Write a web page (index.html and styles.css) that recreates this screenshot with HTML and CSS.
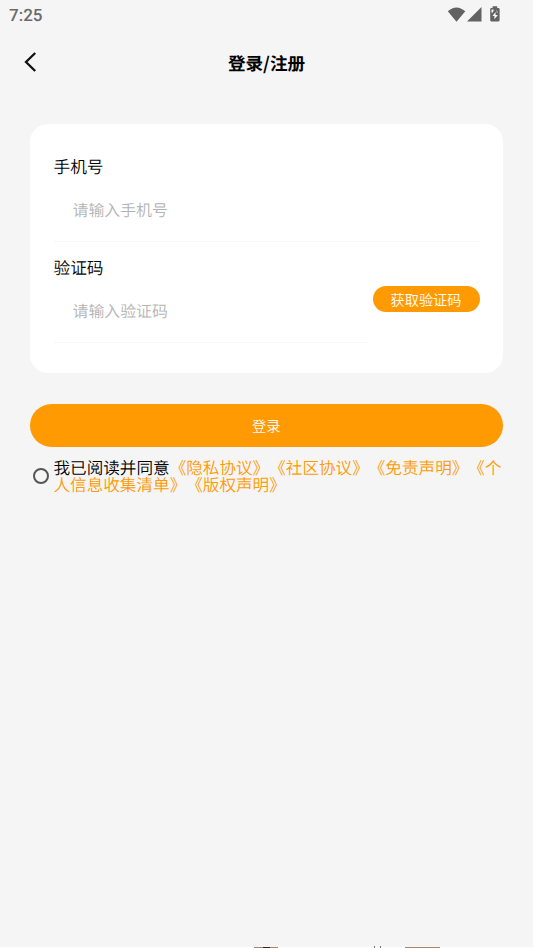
FILE: index.html
```html
<!DOCTYPE html>
<html lang="zh-CN">
<head>
<meta charset="utf-8">
<title>登录/注册</title>
<link rel="stylesheet" href="styles.css">
</head>
<body>
<div class="screen">
  <div class="status">
    <span class="time">7:25</span>
    <svg class="status-icons" width="56" height="20" viewBox="0 0 56 20" fill="#626262">
      <path d="M0.8 5.3Q9.3-2.3 18.3 5.3L9.5 15.8Z"/>
      <path d="M20 15.5L34.5 1V15.5Z"/>
      <path d="M43.2 3Q43.2 1.9 44.3 1.9H45.6V0.3H50.2V1.9H51.5Q52.6 1.9 52.6 3V14.3Q52.6 15.4 51.5 15.4H44.3Q43.2 15.4 43.2 14.3Z"/>
      <path fill="#f5f5f5" d="M48.6 6L45.4 10H47.4V13.2L50.9 9H48.6ZM44.5 3.6H46.6V5L45.4 6.8H44.5ZM49.2 3.6L50.8 6.4L50 7Z"/>
    </svg>
  </div>
  <header class="nav">
    <svg class="back" width="14" height="22" viewBox="0 0 14 22"><path d="M11.2 2L2 11L11.2 20" fill="none" stroke="#111" stroke-width="2.3"/></svg>
    <h1>登录/注册</h1>
  </header>
  <main>
    <section class="card">
      <div class="field">
        <label>手机号</label>
        <div class="input">请输入手机号</div>
      </div>
      <div class="code-row">
        <div class="field">
          <label>验证码</label>
          <div class="input">请输入验证码</div>
        </div>
        <button class="code-btn">获取验证码</button>
      </div>
    </section>
    <button class="login">登录</button>
    <div class="agree">
      <span class="radio"></span>
      <p>我已阅读并同意<a>《隐私协议》</a><a>《社区协议》</a><a>《免责声明》</a><a>《个<br>人信息收集清单》</a><a>《版权声明》</a></p>
    </div>
  </main>
  <svg class="peek" width="533" height="2" viewBox="0 0 533 2">
    <path fill="#fff" d="M0 1H533V2H0Z"/>
    <path fill="#a98563" d="M254 1H278V2H254ZM405 1H440V2H405Z"/>
    <path fill="#33201d" d="M263 1H270V2H263Z"/>
    <path fill="#777" d="M374 0H375V2H374ZM380 0H381V2H380Z"/>
  </svg>
</div>
</body>
</html>
```
FILE: styles.css
```css
* { box-sizing: border-box; }
body {
  margin: 0;
  background: #f5f5f5;
  color: #000;
  font-family: "Noto Sans CJK SC", sans-serif;
  font-weight: 350;
  text-rendering: geometricPrecision;
  text-spacing-trim: space-all;
}
.screen {
  height: 948px;
  display: flex;
  flex-direction: column;
  overflow: hidden;
}
.status {
  height: 32px;
  padding: 6px 30px 0 9px;
  display: flex;
  justify-content: space-between;
}
.time {
  font: 500 17px/21px Roboto, sans-serif;
  color: #6a6a6a;
}
.nav {
  height: 60px;
  display: grid;
  grid-template-columns: 60px 1fr 60px;
  align-items: center;
}
.back { margin-left: 24px; }
h1 {
  margin: 3px 0 0;
  text-align: center;
  font-size: 17.6px;
  line-height: 26px;
  font-weight: 700;
}
main { padding: 32px 30px 0 29.5px; flex: 1; }
.card {
  height: 249px;
  padding: 29px 23.5px 0 24px;
  border-radius: 18px;
  background: #fff;
}
.field { height: 101px; }
.field label {
  display: block;
  font-size: 16.7px;
  line-height: 26px;
}
.input {
  height: 63px;
  padding-left: 19px;
  border-bottom: 1px solid #f7f7f7;
  font-size: 15.9px;
  line-height: 62px;
  color: #b4b4b4;
}
.code-row { display: flex; justify-content: space-between; }
.code-row .field { width: 314px; }
button {
  border: 0;
  padding: 0;
  display: block;
  background: #ff9a03;
  color: #fff;
  font-family: inherit;
  font-weight: inherit;
  font-size: 14.2px;
}
.code-btn {
  width: 107px;
  height: 26px;
  margin-top: 32px;
  border-radius: 13px;
  line-height: 26px;
}
.login {
  width: 100%;
  height: 43px;
  margin-top: 31px;
  border-radius: 21.5px;
  line-height: 43px;
}
.agree {
  margin-top: 12px;
  padding-left: 3.5px;
  display: flex;
  align-items: center;
}
.radio {
  width: 16px;
  height: 16px;
  margin-right: 4.5px;
  border: 2px solid #555;
  border-radius: 50%;
}
.agree p {
  margin: 0;
  font-size: 16.6px;
  line-height: 17px;
  white-space: nowrap;
}
.agree a { color: #ff9a03; }
.peek { display: block; }
```
